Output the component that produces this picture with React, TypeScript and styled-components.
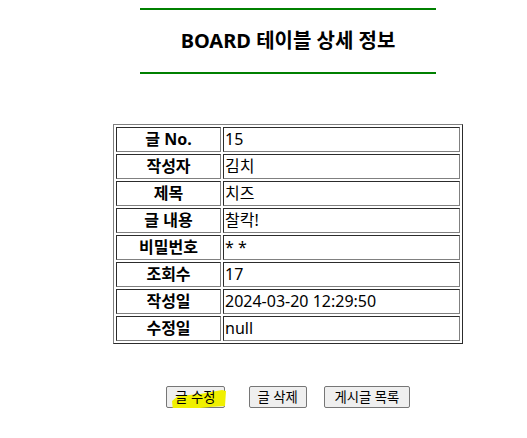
import React from "react";
import styled, { createGlobalStyle } from "styled-components";

const GlobalStyle = createGlobalStyle`
  html, body {
    margin: 0;
    padding: 0;
    background: #ffffff;
  }
  body {
    font-family: "Noto Sans", "Noto Sans CJK KR", sans-serif;
    color: #000000;
  }
`;

const Page = styled.div`
  width: 478px;
  margin-left: 49px;
  display: flex;
  flex-direction: column;
  align-items: center;
  padding-top: 8px;
`;

const TitleBox = styled.div`
  width: 296px;
  border-top: 2px solid #008000;
  border-bottom: 2px solid #008000;
  text-align: center;
`;

const Title = styled.h3`
  margin: 0;
  font-size: 20px;
  font-weight: 700;
  line-height: 62px;
`;

const BoardTable = styled.table`
  margin-top: 50px;
  width: 350px;
  border: 1px outset #808080;
  border-collapse: separate;
  border-spacing: 2px;
  font-size: 16px;
`;

const HeadCell = styled.th`
  width: 101px;
  padding: 1px;
  border: 1px inset #808080;
  font-weight: 700;
  text-align: center;
  line-height: 21px;
  white-space: nowrap;
`;

const ValueCell = styled.td`
  padding: 1px;
  border: 1px inset #808080;
  text-align: left;
  line-height: 21px;
  white-space: nowrap;
`;

const ButtonRow = styled.div`
  margin-top: 42px;
  display: flex;
  align-items: center;
`;

const Button = styled.button<{ $gap?: number; $pad?: number }>`
  margin-left: ${p => p.$gap ?? 0}px;
  padding: 1px ${p => p.$pad ?? 8}px;
  height: 22px;
  font-family: "Noto Sans", "Noto Sans CJK KR", sans-serif;
  font-size: 13.33px;
  line-height: 18px;
  color: #000000;
  background: #efefef;
  border: 1px solid #767676;
  border-radius: 2px;
  cursor: pointer;
`;

const Marked = styled.span`
  position: relative;
  display: inline-block;
`;

const MarkText = styled.span`
  position: relative;
`;

const Highlight = styled.svg`
  position: absolute;
  left: 0;
  top: 0;
  overflow: visible;
  pointer-events: none;
`;

const rows: [string, string][] = [
  ["글 No.", "15"],
  ["작성자", "김치"],
  ["제목", "치즈"],
  ["글 내용", "찰칵!"],
  ["비밀번호", "* *"],
  ["조회수", "17"],
  ["작성일", "2024-03-20 12:29:50"],
  ["수정일", "null"],
];

export default function App() {
  return (
    <>
      <GlobalStyle />
      <Page>
        <TitleBox>
          <Title>BOARD 테이블 상세 정보</Title>
        </TitleBox>

        <BoardTable>
          <tbody>
            {rows.map(([head, value]) => (
              <tr key={head}>
                <HeadCell>{head}</HeadCell>
                <ValueCell>{value}</ValueCell>
              </tr>
            ))}
          </tbody>
        </BoardTable>

        <ButtonRow>
          <Button>
            <Marked>
              {/* highlighter mark over the first button */}
              <Highlight width="44" height="18" viewBox="0 0 44 18">
                <path
                  d="M3 8 L25 6 L47 2 L51 3 L50 18 L35 19 L15 21 L-2 23 L-3 13 Z"
                  fill="#f0f000"
                />
              </Highlight>
              <MarkText>글 수정</MarkText>
            </Marked>
          </Button>
          <Button $gap={24}>글 삭제</Button>
          <Button $gap={17} $pad={9.5}>
            게시글 목록
          </Button>
        </ButtonRow>
      </Page>
    </>
  );
}
